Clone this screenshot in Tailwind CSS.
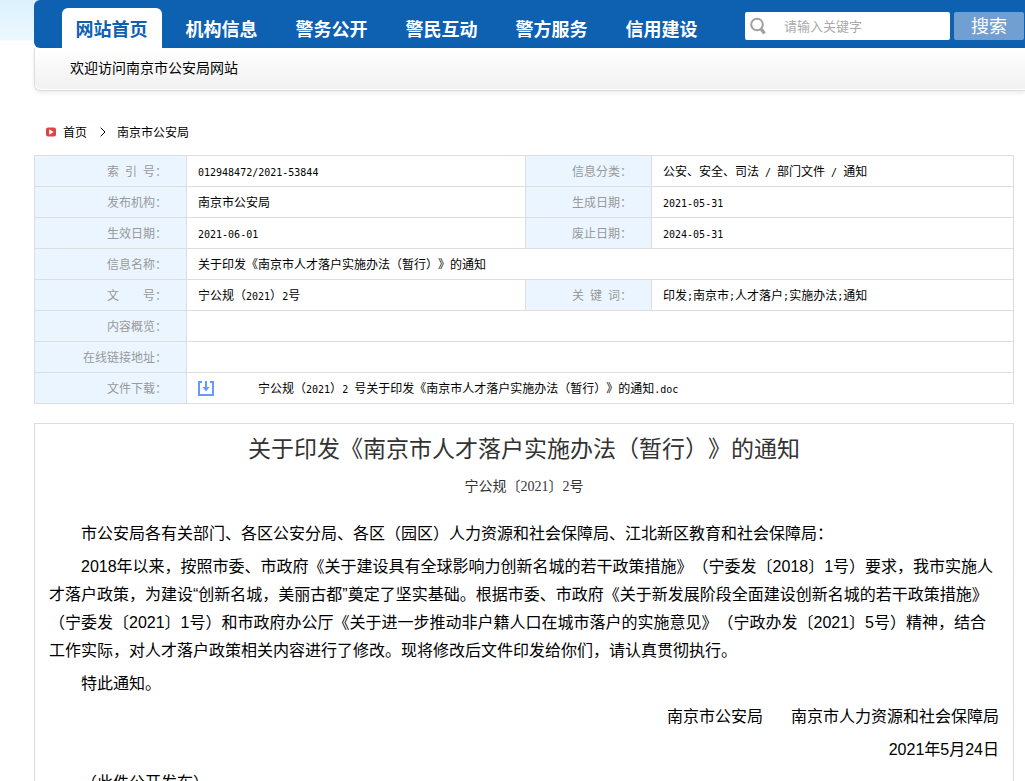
<!DOCTYPE html>
<html lang="zh-CN">
<head>
<meta charset="utf-8">
<title>南京市公安局</title>
<script src="https://cdn.jsdelivr.net/npm/@tailwindcss/browser@4"></script>
</head>
<body class="bg-white font-['Liberation_Sans','Noto_Sans_CJK_SC',sans-serif] text-black [text-spacing-trim:space-all]">
<div class="overflow-hidden bg-linear-to-b from-[#dcf1fd] from-0% via-[#edf8fe] via-[40px] to-white to-[41px]">
  <header class="ml-[34px]">
    <div class="flex h-12 rounded-l-md bg-[#0e60b1] pl-7 pr-px">
      <nav class="flex flex-1 items-end gap-[10px] text-lg font-bold text-white">
        <a href="#" class="flex h-10 w-[100px] items-center justify-center rounded-t-md bg-white pt-[3px] pr-px text-[#0e60b1]">网站首页</a>
        <a href="#" class="flex h-10 w-[100px] items-center justify-center pt-[3px] pr-px">机构信息</a>
        <a href="#" class="flex h-10 w-[100px] items-center justify-center pt-[3px] pr-px">警务公开</a>
        <a href="#" class="flex h-10 w-[100px] items-center justify-center pt-[3px] pr-px">警民互动</a>
        <a href="#" class="flex h-10 w-[100px] items-center justify-center pt-[3px] pr-px">警方服务</a>
        <a href="#" class="flex h-10 w-[100px] items-center justify-center pt-[3px] pr-px">信用建设</a>
      </nav>
      <form class="flex gap-1 pt-3">
        <label class="flex h-7 w-[205px] items-center rounded-xs bg-white pl-1">
          <svg class="h-5 w-5 shrink-0" viewBox="0 0 20 20" fill="none" stroke="#a0a0a0"><circle cx="8" cy="8.5" r="5.8" stroke-width="2"/><path d="M12 13 15.5 17.5" stroke-width="3.2"/></svg>
          <input type="text" aria-label="搜索关键字" placeholder="请输入关键字" class="w-full min-w-0 pt-0.5 pl-[15px] text-[13px] outline-none placeholder:text-[#aaa]">
        </label>
        <button type="button" class="h-7 w-[70px] rounded-xs bg-[#729fd2] pt-0.5 text-lg leading-6 text-white">搜索</button>
      </form>
    </div>
    <div class="rounded-bl-md border-b border-l border-[#ddd] bg-white pb-px shadow-[0_2px_4px_rgba(0,0,0,0.08)]">
      <div class="h-[41px] rounded-bl-md bg-linear-to-b from-white to-[#f1f1f1] pl-[35px] text-sm leading-10">欢迎访问南京市公安局网站</div>
    </div>
  </header>
  <div class="h-2"></div>
</div>

<main class="ml-[34px] mr-[11px]">
  <nav class="flex h-14 items-center pt-[10px] pl-3 text-xs">
    <svg class="mr-[7px] h-[10px] w-[10px]" viewBox="0 0 10 10"><rect y=".5" width="10" height="9" rx="2" fill="#dd4444"/><path d="M3.2 2.2 7.6 5 3.2 7.8Z" fill="#fff"/></svg>
    <a href="#" class="pt-0.5">首页</a>
    <svg class="mr-[11px] ml-[13px] h-[10px] w-[6px]" viewBox="0 0 6 10" fill="none" stroke="#000"><path d="M.7.7 5 5 .7 9.3"/></svg>
    <a href="#" class="pt-0.5">南京市公安局</a>
  </nav>

  <table class="w-full table-fixed border-collapse text-xs [&_td]:h-[31px] [&_td]:border [&_td]:border-[#ddd] [&_td]:pt-0.5 [&_td]:pl-[11px] [&_th]:h-[31px] [&_th]:border [&_th]:border-[#ddd] [&_th]:bg-[#eaf5ff] [&_th]:pt-0.5 [&_th]:pr-[19px] [&_th]:text-right [&_th]:font-normal [&_th]:whitespace-pre [&_th]:text-[#999]">
    <colgroup><col class="w-[152px]"><col><col class="w-[126px]"><col class="w-[362px]"></colgroup>
    <tr><th scope="row">索<span class="px-[6px]">引</span>号：</th><td><span class="font-['DejaVu_Sans_Mono'] text-[10px]">012948472/2021-53844</span></td><th scope="row">信息分类：</th><td class="whitespace-pre">公安、安全、司法<span class="font-['DejaVu_Sans_Mono'] text-[10px]"> / </span>部门文件<span class="font-['DejaVu_Sans_Mono'] text-[10px]"> / </span>通知</td></tr>
    <tr><th scope="row">发布机构：</th><td>南京市公安局</td><th scope="row">生成日期：</th><td><span class="font-['DejaVu_Sans_Mono'] text-[10px]">2021-05-31</span></td></tr>
    <tr><th scope="row">生效日期：</th><td><span class="font-['DejaVu_Sans_Mono'] text-[10px]">2021-06-01</span></td><th scope="row">废止日期：</th><td><span class="font-['DejaVu_Sans_Mono'] text-[10px]">2024-05-31</span></td></tr>
    <tr><th scope="row">信息名称：</th><td colspan="3">关于印发《南京市人才落户实施办法（暂行）》的通知</td></tr>
    <tr><th scope="row">文<span class="pl-6">号：</span></th><td>宁公规（<span class="font-['DejaVu_Sans_Mono'] text-[10px]">2021</span>）<span class="font-['DejaVu_Sans_Mono'] text-[10px]">2</span>号</td><th scope="row">关<span class="px-[6px]">键</span>词：</th><td>印发<span class="font-['DejaVu_Sans_Mono'] text-[10px]">;</span>南京市<span class="font-['DejaVu_Sans_Mono'] text-[10px]">;</span>人才落户<span class="font-['DejaVu_Sans_Mono'] text-[10px]">;</span>实施办法<span class="font-['DejaVu_Sans_Mono'] text-[10px]">;</span>通知</td></tr>
    <tr><th scope="row">内容概览：</th><td colspan="3"></td></tr>
    <tr><th scope="row">在线链接地址：</th><td colspan="3"></td></tr>
    <tr><th scope="row">文件下载：</th><td colspan="3"><a href="#" class="flex items-center whitespace-pre"><svg class="mr-11 h-4 w-4" viewBox="0 0 16 16" fill="none" stroke="#6699f8" stroke-width="2"><path d="M4 1H1V14H15V1H12"/><path d="M8 0V8"/><path d="M4.5 6h7L8 10.5Z" fill="#6699f8" stroke="none"/></svg><span>宁公规（<span class="font-['DejaVu_Sans_Mono'] text-[10px]">2021</span>）<span class="font-['DejaVu_Sans_Mono'] text-[10px]">2 </span>号关于印发《南京市人才落户实施办法（暂行）》的通知<span class="font-['DejaVu_Sans_Mono'] text-[10px]">.doc</span></span></a></td></tr>
  </table>

  <article class="mt-[19px] border border-b-0 border-[#ddd] px-[14px] pt-[9px] pb-8">
    <h1 class="text-center text-[23px] leading-8 text-[#333]">关于印发《南京市人才落户实施办法（暂行）》的通知</h1>
    <p class="mt-2 text-center font-['Liberation_Serif','Noto_Sans_CJK_SC',serif] text-sm leading-7 text-[#333]">宁公规〔2021〕2号</p>
    <div class="mt-[19px] flex flex-col gap-[5px] text-base leading-7">
      <p class="indent-8">市公安局各有关部门、各区公安分局、各区（园区）人力资源和社会保障局、江北新区教育和社会保障局：</p>
      <p class="indent-8">2018年以来，按照市委、市政府《关于建设具有全球影响力创新名城的若干政策措施》（宁委发〔2018〕1号）要求，我市实施人才落户政策，为建设“创新名城，美丽古都”奠定了坚实基础。根据市委、市政府《关于新发展阶段全面建设创新名城的若干政策措施》（宁委发〔2021〕1号）和市政府办公厅《关于进一步推动非户籍人口在城市落户的实施意见》（宁政办发〔2021〕5号）精神，结合工作实际，对人才落户政策相关内容进行了修改。现将修改后文件印发给你们，请认真贯彻执行。</p>
      <p class="indent-8">特此通知。</p>
      <p class="flex justify-end gap-7"><span>南京市公安局</span><span>南京市人力资源和社会保障局</span></p>
      <p class="text-right">2021年5月24日</p>
      <p class="indent-8">（此件公开发布）</p>
    </div>
  </article>
</main>
</body>
</html>
